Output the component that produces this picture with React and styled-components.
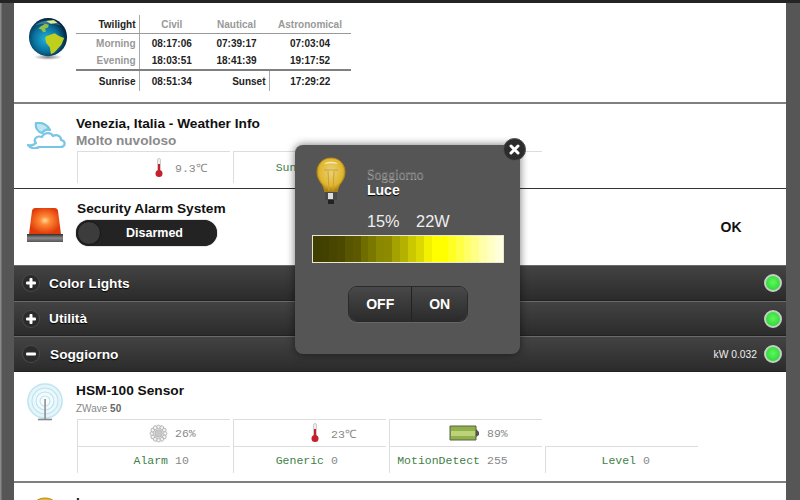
import styled, { createGlobalStyle } from 'styled-components';

const GlobalStyle = createGlobalStyle`
  html, body {
    margin: 0;
    height: 500px;
    overflow: hidden;
    background: #565656;
    font-family: "Liberation Sans", Arial, sans-serif;
  }
`;

const Page = styled.div`
  position: relative;
  width: 800px;
  height: 500px;
  box-sizing: border-box;
  overflow: hidden;
  padding: 0 14px;
  border-top: 3px solid #242424;
  background: linear-gradient(90deg, #8a8a8a 0, #8a8a8a 1px, #565656 2px);
`;

const Row = styled.section`
  display: flex;
  box-sizing: border-box;
  height: ${(p) => p.$height}px;
  background: #fff;
  border-bottom: ${(p) => p.$rule || '1px solid #333'};
`;

const IconCol = styled.div`
  flex: none;
  width: 62px;
  display: flex;
  justify-content: center;
  padding-top: ${(p) => p.$top}px;
  padding-left: ${(p) => p.$shift || 0}px;
  box-sizing: border-box;
`;

const Content = styled.div`
  flex: 1;
  padding-top: ${(p) => p.$top}px;
  color: #111;
`;

const Title = styled.div`
  font-size: 13.7px;
  font-weight: bold;
  line-height: 17px;
  color: #111;
  margin-left: ${(p) => p.$indent || 0}px;
`;

const Subtitle = styled.div`
  font-size: 13.6px;
  font-weight: bold;
  line-height: 17px;
  color: #8a8a8a;
`;

const Small = styled.div`
  font-size: 10px;
  line-height: 14px;
  margin-top: 3px;
  color: #888;
  b { color: #666; }
`;

const SunTable = styled.table`
  border-collapse: collapse;
  table-layout: fixed;
  width: 275px;
  margin-top: 12px;
  font-size: 10px;
  font-weight: bold;
  color: #222;

  td {
    padding: 0;
    height: 18px;
    text-align: center;
  }
  tr:first-child td { border-bottom: 1px solid #999; }
  tr:nth-child(3) td { border-bottom: 2px solid #808080; height: 17px; }
  tr:last-child td { height: 20px; }
`;

const Label = styled.td`
  && { text-align: right; padding-right: 3px; }
  box-sizing: border-box;
  border-right: 1px solid #aaa;
  color: ${(p) => (p.$muted ? '#999' : '#222')};
`;

const Head = styled.td`
  color: #999;
`;

const SensorGrid = styled.div`
  display: grid;
  grid-template-columns: repeat(4, 153px);
  column-gap: 3px;
  grid-auto-rows: ${(p) => p.$rowHeight}px;
  margin-top: ${(p) => p.$top}px;
  margin-left: 1px;
`;

const Cell = styled.div`
  display: grid;
  grid-template-columns: 90px 1fr;
  column-gap: 7px;
  align-items: center;
  justify-items: end;
  border-left: 1px solid #ddd;
  border-top: 1px solid #ddd;
  font-family: "Liberation Mono", "Courier New", monospace;
  font-size: 11.5px;
  color: #888;
  white-space: nowrap;
`;

const Value = styled.span`
  justify-self: start;
`;

const BlankCell = styled.div``;

const Name = styled.span`
  color: #3f7f47;
`;

const Toggle = styled.div`
  position: relative;
  display: flex;
  align-items: center;
  justify-content: center;
  width: 141px;
  height: 26px;
  margin-top: 3px;
  border-radius: 13px;
  background: #232323;
  box-shadow: 0 0 1px #000;
  color: #fff;
  font-size: 12.5px;
  font-weight: bold;
  padding-left: 16px;
  box-sizing: border-box;
`;

const Knob = styled.span`
  position: absolute;
  left: 1px;
  top: 1px;
  width: 24px;
  height: 24px;
  border-radius: 50%;
  background: #3c3c3c;
  border: 1px solid #151515;
  box-sizing: border-box;
`;

const Status = styled.div`
  flex: none;
  width: 110px;
  align-self: center;
  text-align: center;
  font-size: 14px;
  font-weight: bold;
  color: #111;
`;

const Header = styled.header`
  display: flex;
  align-items: center;
  box-sizing: border-box;
  height: ${(p) => p.$height || 35}px;
  padding: 0 4px 0 9px;
  color: #fff;
  background: linear-gradient(#434343, #2b2b2b);
  border-top: 1px solid #6a6a6a;
  border-bottom: 1px solid #222;
`;

const Toggler = styled.span`
  flex: none;
  width: 16px;
  height: 16px;
  border-radius: 50%;
  background: #2b2b2b;
  box-shadow: 0 0 0 1px #4a4a4a;
  display: flex;
  align-items: center;
  justify-content: center;
  margin-right: ${(p) => p.$gap}px;
`;

const HeaderTitle = styled.span`
  flex: 1;
  font-size: 13.7px;
  font-weight: bold;
  text-shadow: 0 1px 1px #000;
`;

const Power = styled.span`
  font-size: 10.3px;
  color: #eee;
  margin-right: 7px;
`;

const Led = styled.span`
  flex: none;
  width: 18px;
  height: 18px;
  border-radius: 50%;
  border: 2px solid #c4d0c4;
  box-sizing: border-box;
  background: radial-gradient(circle at 50% 45%, #5cf85c, #24cc30);
`;

const Popup = styled.div`
  position: absolute;
  left: 295px;
  top: 142px;
  width: 225px;
  height: 209px;
  box-sizing: border-box;
  padding: 12px 16px 0 17px;
  border-radius: 8px;
  background: #555;
  box-shadow: 0 0 9px rgba(0, 0, 0, 0.55);
`;

const PopupTop = styled.div`
  display: flex;
  gap: 20px;
  height: 48px;
  margin-left: 3px;
`;

const PopupNames = styled.div`
  padding-top: 11px;
`;

const Room = styled.div`
  font-family: "Liberation Serif", serif;
  font-size: 13.6px;
  line-height: 14px;
  color: #6f6f6f;
  text-shadow: 0 1px 0 #aaa;
`;

const Device = styled.div`
  font-size: 14px;
  font-weight: bold;
  line-height: 16px;
  color: #fff;
  text-shadow: 0 1px 1px #000;
`;

const Reading = styled.div`
  margin: 7px 0 0 55px;
  font-size: 16.3px;
  line-height: 18px;
  color: #eee;
  word-spacing: 12px;
`;

const Bar = styled.div`
  display: flex;
  height: 28px;
  margin-top: 5px;
  box-sizing: border-box;
  border: 1px solid #e8e8d0;
`;

const Swatch = styled.span`
  flex: 1;
  background: ${(p) => p.$color};
`;

const ButtonGroup = styled.div`
  display: flex;
  width: 120px;
  height: 36px;
  margin: 23px 0 0 36px;
  border-radius: 9px;
  overflow: hidden;
  border: 1px solid #2a2a2a;
  box-sizing: border-box;
  box-shadow: 0 1px 0 #666;
`;

const PopupButton = styled.button`
  flex: ${(p) => p.$grow};
  border: 0;
  border-left: ${(p) => (p.$split ? '1px solid #222' : '0')};
  padding: 0;
  color: #fff;
  font-family: inherit;
  font-size: 14px;
  font-weight: bold;
  background: linear-gradient(#484848, #2b2b2b);
`;

const Close = styled.button`
  position: absolute;
  right: -6px;
  top: -7px;
  width: 23px;
  height: 23px;
  padding: 0;
  border: 1px solid #555;
  border-radius: 50%;
  background: #2c2c2c;
  display: flex;
  align-items: center;
  justify-content: center;
`;

const BAR_COLORS = [
  '#403e00', '#434100', '#474500', '#4b4800', '#585500', '#5c5900', '#6f6c00', '#7b7800',
  '#8a8700', '#8d8a00', '#a5a200', '#b4b100', '#cbc800', '#dcd900', '#f3f000', '#ffff00',
  '#ffff00', '#ffff22', '#ffff45', '#ffff66', '#ffff88', '#ffffaa', '#ffffc4', '#ffffdc',
];

const Globe = () => (
  <svg width="40" height="43" viewBox="0 0 42 45">
    <defs>
      <radialGradient id="sea" cx="45%" cy="55%" r="55%">
        <stop offset="0" stopColor="#1fb4dc" />
        <stop offset="0.62" stopColor="#0a6d9a" />
        <stop offset="1" stopColor="#03233e" />
      </radialGradient>
      <radialGradient id="ground" cx="50%" cy="50%" r="50%">
        <stop offset="0" stopColor="#000" stopOpacity="0.5" />
        <stop offset="1" stopColor="#000" stopOpacity="0" />
      </radialGradient>
    </defs>
    <ellipse cx="21" cy="41" rx="15" ry="3" fill="url(#ground)" />
    <circle cx="21" cy="20" r="20" fill="url(#sea)" />
    <path d="M19 19l9-3 5 3 5 2-3 7-7 8-4 2-1-7-4-5-1-5z" fill="#c0cf1e" />
    <path d="M13 9l5-3 4 1-1 3-3 1 1 3-3 1-2-3-3-1z" fill="#8fc048" />
    <path d="M19 3l8-1 4 3-7 1z" fill="#cfe77a" />
    <path d="M7 8c6-6 20-8 28 0-8-3-20-3-28 0z" fill="#fff" opacity="0.25" />
  </svg>
);

const CloudMoon = () => (
  <svg width="40" height="27" viewBox="0 0 40 27" fill="none" stroke="#76c6e4" strokeWidth="2.2" strokeLinejoin="round">
    <path d="M9 1c6-1 12 2 14 7-3-1-6 0-8 3-4-1-7-5-6-10z" fill="#bfe6f3" />
    <path d="M1 23c3 1 6 0 8-2-3-3 0-8 6-6 2-5 9-5 11-1 4-2 8 0 8 4 5 1 5 7-1 7H12c-3 2-8 2-11-2z" fill="#fff" />
  </svg>
);

const Beacon = () => (
  <svg width="36" height="36" viewBox="0 0 36 36">
    <defs>
      <radialGradient id="lamp" cx="50%" cy="48%" r="52%">
        <stop offset="0" stopColor="#ffdca0" />
        <stop offset="0.3" stopColor="#ff8a34" />
        <stop offset="1" stopColor="#e03a0a" />
      </radialGradient>
      <linearGradient id="base" x1="0" x2="0" y1="0" y2="1">
        <stop offset="0" stopColor="#2e2e2e" />
        <stop offset="0.5" stopColor="#8a8a8a" />
        <stop offset="1" stopColor="#555" />
      </linearGradient>
    </defs>
    <path d="M5 4c0-2 2-3 3-3h20c1 0 3 1 3 3l3 23H2z" fill="url(#lamp)" />
    <rect x="0" y="27" width="36" height="8" fill="url(#base)" />
  </svg>
);

const Thermometer = () => (
  <svg width="18" height="20" viewBox="-4 0 18 20">
    <rect x="3.5" y="0.5" width="3" height="13" rx="1.5" fill="#eee" stroke="#ccc" />
    <rect x="4" y="6" width="2" height="8" fill="#c5202c" />
    <circle cx="5" cy="15.5" r="3.5" fill="#c5202c" />
  </svg>
);

const Humidity = () => (
  <svg width="19" height="19" viewBox="0 0 20 20" fill="#f4f4f4" stroke="#b5b5b5">
    {[0, 30, 60, 90, 120, 150, 180, 210, 240, 270, 300, 330].map((a) => (
      <circle key={a} cx="10" cy="3" r="1.9" transform={`rotate(${a} 10 10)`} />
    ))}
    <circle cx="10" cy="10" r="4" fill="#c8c8c8" />
  </svg>
);

const Battery = () => (
  <svg width="31" height="16" viewBox="0 0 31 16">
    <path d="M1 1h26v14H1z" fill="#8fb04a" stroke="#5a6148" />
    <rect x="2" y="6" width="24" height="5" fill="#bcd37a" />
    <path d="M27 4l3 3v3l-3 2z" fill="#555" />
  </svg>
);

const Antenna = () => (
  <svg width="36" height="38" viewBox="0 0 36 38" fill="none">
    <defs>
      <radialGradient id="waves" cx="50%" cy="50%" r="50%">
        <stop offset="0" stopColor="#e4f5fa" stopOpacity="0.1" />
        <stop offset="1" stopColor="#c8e9f4" stopOpacity="0.6" />
      </radialGradient>
    </defs>
    <circle cx="18" cy="18" r="18" fill="url(#waves)" />
    {[17, 13, 9, 5].map((r) => (
      <circle key={r} cx="18" cy="18" r={r} stroke="#b9e3f1" strokeWidth="1.1" />
    ))}
    <rect x="17.2" y="16" width="1.8" height="20" fill="#9a9a9a" />
    <path d="M11 36.5h14" stroke="#888" strokeWidth="1.6" />
  </svg>
);

const Bulb = ({ id, size }) => (
  <svg width={size} height={size * 1.5} viewBox="0 0 32 48">
    <defs>
      <radialGradient id={id} cx="50%" cy="40%" r="58%">
        <stop offset="0" stopColor="#ead27a" />
        <stop offset="0.72" stopColor="#e0b62c" />
        <stop offset="1" stopColor="#a87c10" />
      </radialGradient>
    </defs>
    <path d="M16 1C7 1 2 8 2 15c0 5 2 8 4 11 2 2 3 5 4 9h12c1-4 2-7 4-9 2-3 4-6 4-11 0-7-5-14-14-14z" fill={`url(#${id})`} stroke="#b58a16" />
    <path d="M9 13h14M13 14l1 20M19 14l-1 20" stroke="#c9a238" strokeWidth="1" fill="none" />
    <path d="M9 7c3-3 11-3 14 0-4-1-10-1-14 0z" fill="#f8efbe" />
    <rect x="10" y="35" width="12" height="8" fill="#4a4a4a" />
    <rect x="13" y="36" width="5" height="6" fill="#ddd" />
    <rect x="13" y="43" width="6" height="4" fill="#222" />
  </svg>
);

const PlusMinus = ({ minus }) => (
  <svg width="10" height="10" viewBox="0 0 10 10" fill="#fff">
    <rect x="0" y="3.5" width="10" height="3" rx="1" />
    {!minus && <rect x="3.5" y="0" width="3" height="10" rx="1" />}
  </svg>
);

const Group = ({ title, minus, power, height }) => (
  <Header $height={height}>
    <Toggler $gap={minus ? 11 : 10}>
      <PlusMinus minus={minus} />
    </Toggler>
    <HeaderTitle>{title}</HeaderTitle>
    {power && <Power>{power}</Power>}
    <Led />
  </Header>
);

const Measure = ({ icon, value }) => (
  <Cell>
    {icon}
    <Value>{value}</Value>
  </Cell>
);

const Level = ({ name, value }) => (
  <Cell>
    <Name>{name}</Name>
    <Value>{value}</Value>
  </Cell>
);

export default function App() {
  return (
    <>
      <GlobalStyle />
      <Page>
        <Row $height={101} $rule="2px solid #808080">
          <IconCol $top={15} $shift={6}>
            <Globe />
          </IconCol>
          <Content>
            <SunTable>
              <colgroup>
                <col width="63" />
                <col width="65" />
                <col width="65" />
                <col width="82" />
              </colgroup>
              <tbody>
                <tr>
                  <Label>Twilight</Label>
                  <Head>Civil</Head>
                  <Head>Nautical</Head>
                  <Head>Astronomical</Head>
                </tr>
                <tr>
                  <Label $muted>Morning</Label>
                  <td>08:17:06</td>
                  <td>07:39:17</td>
                  <td>07:03:04</td>
                </tr>
                <tr>
                  <Label $muted>Evening</Label>
                  <td>18:03:51</td>
                  <td>18:41:39</td>
                  <td>19:17:52</td>
                </tr>
                <tr>
                  <Label>Sunrise</Label>
                  <td>08:51:34</td>
                  <Label>Sunset</Label>
                  <td>17:29:22</td>
                </tr>
              </tbody>
            </SunTable>
          </Content>
        </Row>

        <Row $height={85}>
          <IconCol $top={18} $shift={4}>
            <CloudMoon />
          </IconCol>
          <Content $top={11}>
            <Title>Venezia, Italia - Weather Info</Title>
            <Subtitle>Molto nuvoloso</Subtitle>
            <SensorGrid $rowHeight={32} $top={2}>
              <Measure icon={<Thermometer />} value="9.3℃" />
              <Level name="Sunrise" value="08:51" />
              <Cell />
            </SensorGrid>
          </Content>
        </Row>

        <Row $height={76} $rule="0">
          <IconCol $top={18}>
            <Beacon />
          </IconCol>
          <Content $top={11}>
            <Title $indent={1}>Security Alarm System</Title>
            <Toggle>
              <Knob />
              Disarmed
            </Toggle>
          </Content>
          <Status>OK</Status>
        </Row>

        <Group title="Color Lights" height={36} />
        <Group title="Utilità" height={35} />
        <Group title="Soggiorno" minus power="kW 0.032" height={36} />

        <Row $height={111} $rule="2px solid #808080">
          <IconCol $top={11}>
            <Antenna />
          </IconCol>
          <Content $top={10}>
            <Title>HSM-100 Sensor</Title>
            <Small>
              ZWave <b>50</b>
            </Small>
            <SensorGrid $rowHeight={27} $top={3}>
              <Measure icon={<Humidity />} value="26%" />
              <Measure icon={<Thermometer />} value="23℃" />
              <Measure icon={<Battery />} value="89%" />
              <BlankCell />
              <Level name="Alarm" value="10" />
              <Level name="Generic" value="0" />
              <Level name="MotionDetect" value="255" />
              <Level name="Level" value="0" />
            </SensorGrid>
          </Content>
        </Row>

        <Row $height={60}>
          <IconCol $top={14}>
            <Bulb id="bulb-row" size={32} />
          </IconCol>
          <Content $top={11}>
            <Title>Luce</Title>
          </Content>
        </Row>

        <Popup>
          <Close aria-label="close">
            <svg width="11" height="11" viewBox="0 0 11 11" stroke="#fff" strokeWidth="3" strokeLinecap="round">
              <path d="M2 2l7 7M9 2l-7 7" />
            </svg>
          </Close>
          <PopupTop>
            <Bulb id="bulb-popup" size={32} />
            <PopupNames>
              <Room>Soggiorno</Room>
              <Device>Luce</Device>
            </PopupNames>
          </PopupTop>
          <Reading>15% 22W</Reading>
          <Bar>
            {BAR_COLORS.map((c, i) => (
              <Swatch key={i} $color={c} />
            ))}
          </Bar>
          <ButtonGroup>
            <PopupButton $grow="64">OFF</PopupButton>
            <PopupButton $grow="56" $split>
              ON
            </PopupButton>
          </ButtonGroup>
        </Popup>
      </Page>
    </>
  );
}
